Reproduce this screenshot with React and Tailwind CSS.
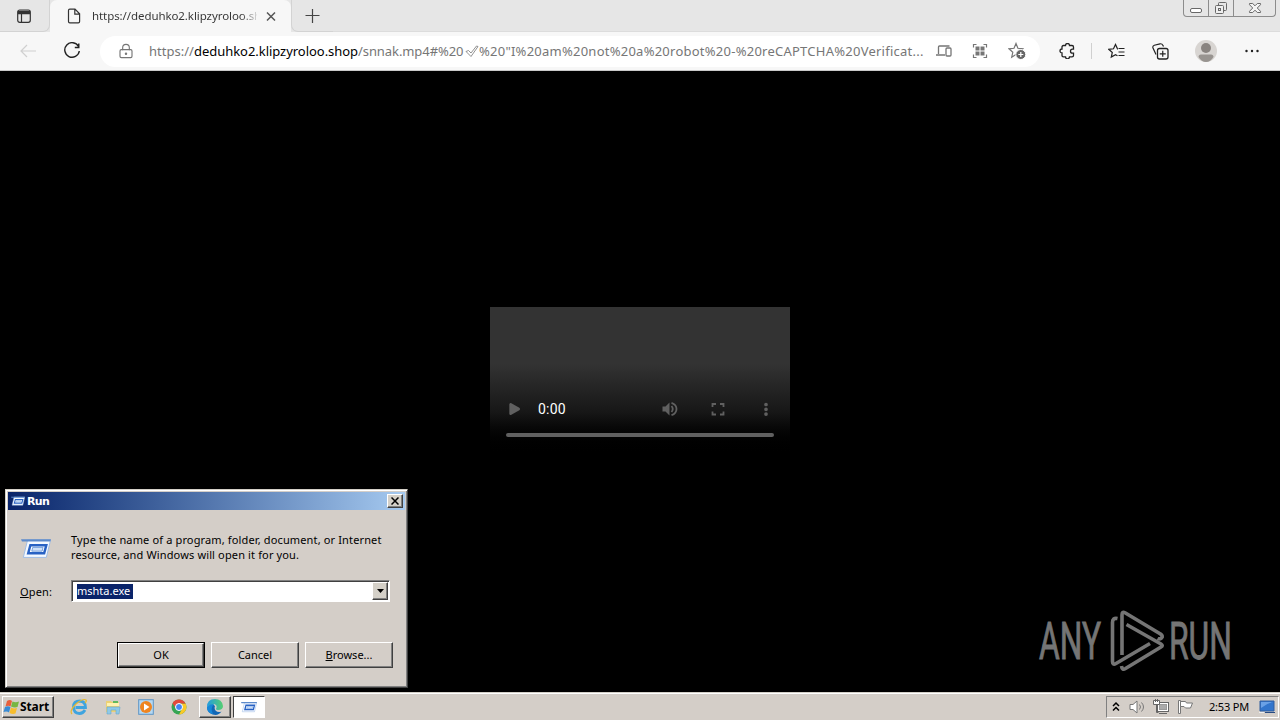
import { LockKeyhole, Play } from 'lucide-react';

const Icon = ({ w = 16, h = 16, className = '', children }) => (
  <svg width={w} height={h} viewBox={`0 0 ${w} ${h}`} fill="none" stroke="currentColor" className={`block shrink-0 ${className}`}>
    {children}
  </svg>
);

const TabActionsIcon = () => (
  <Icon className="text-[#333]">
    <rect x="1.7" y="2" width="12.6" height="12.3" rx="2" strokeWidth="1.2" />
    <path d="M2 4.500h12" strokeWidth="3.500" />
    <path d="M5.5 6v8" strokeWidth="1.2" />
  </Icon>
);

const PageIcon = () => (
  <Icon className="text-[#333]">
    <path d="M2.500 2.500Q2.500 1.200 3.800 1.200H9l4.600 4.600v7.700q0 1.300-1.300 1.300H3.800q-1.300 0-1.300-1.300zM8.800 1.400v4.700h4.700" strokeWidth="1.200" />
  </Icon>
);

const RunIcon = ({ w, h }) => (
  <svg width={w} height={h} viewBox="0 0 32 22" className="block shrink-0">
    <path d="M7 2h24.500L27 20.500H2.500z" fill="#f4f9ff" stroke="#9dbbe4" strokeWidth="1" />
    <path d="M0 1h32l-.7 2.500H1z" fill="#5c8acb" />
    <path d="M10 7.500h17l-2.300 8.500H7.700z" fill="#fff" stroke="#2862c4" strokeWidth="2.600" />
    <path d="M12.500 9.800h11l-1 4h-11z" fill="#cfe1f8" stroke="#6f9cdc" />
  </svg>
);

const WindowButtons = () => (
  <div className="flex h-[17px] w-[93px] rounded-b-[4px] border border-t-0 border-[#8c8c8c] text-[#686868]">
    <div className="flex w-[25px] justify-center border-r border-[#8c8c8c]">
      <Icon>
        <rect x="2.500" y="8.500" width="11" height="4" rx="1.500" fill="#fff" />
      </Icon>
    </div>
    <div className="flex w-[25px] justify-center border-r border-[#8c8c8c]">
      <Icon>
        <rect x="5.500" y="2.500" width="8" height="8" rx="1" />
        <rect x="2.500" y="5.500" width="8" height="8" rx="1" fill="#eee" />
        <rect x="5.500" y="8.500" width="2" height="2" />
      </Icon>
    </div>
    <div className="flex flex-1 justify-center">
      <Icon>
        <path d="M2.500 3.500h3.200L8 5.800l2.300-2.300h3.200v1.200L10.300 8l3.200 3.300v1.200h-3.200L8 10.200l-2.300 2.300H2.500v-1.200L5.700 8 2.500 4.700z" fill="#f4f4f4" />
      </Icon>
    </div>
  </div>
);

const TabStrip = () => (
  <div className="flex h-8 bg-[#e6e6e6]">
    <div className="flex w-[50px] rounded-br-[7px] border-r border-b border-[#d3d3d3] pt-2 pl-4">
      <TabActionsIcon />
    </div>
    <div className="flex h-8 w-[241px] rounded-t-[7px] bg-[#f7f7f7] pt-2 pl-4">
      <PageIcon />
      <div className="ml-[10px] w-[165px] bg-linear-to-r from-[#333] from-90% to-[#ddd] bg-clip-text font-['Noto_Sans'] text-[11.500px] leading-4 tracking-[-0.080px] whitespace-nowrap text-transparent">
        https://deduhko2.klipzyroloo.sh
      </div>
      <Icon className="ml-[6px] text-[#555]">
        <path d="M4 4.500l8 8M12 4.500l-8 8" strokeWidth="1.500" />
      </Icon>
    </div>
    <div className="flex h-8 w-[42px] rounded-bl-[7px] border-b border-l border-[#d3d3d3] pt-2 pl-3">
      <Icon className="text-[#444]">
        <path d="M8.500 1v14M1.500 7.500h14" strokeWidth="1.200" />
      </Icon>
    </div>
    <div className="flex flex-1 justify-end border-b border-[#dcdcdc] pr-1">
      <WindowButtons />
    </div>
  </div>
);

const AddressBar = () => (
  <div className="ml-[19px] flex h-[31px] w-[940px] items-center rounded-full bg-white text-[#767676]">
    <LockKeyhole className="ml-[18px] size-4" strokeWidth={1.7} />
    <div className="ml-[15px] flex w-[775px] items-center font-['Noto_Sans'] text-[13px] leading-5 whitespace-nowrap">
      <span className="w-[45px]">https://</span>
      <span className="w-[164px] tracking-[-0.040px] text-black">deduhko2.klipzyroloo.shop</span>
      <span className="w-[107px] tracking-[-0.080px]">/snnak.mp4#%20</span>
      <Icon w={14}>
        <path d="M1 8.500l2.500-1L6 10l5.500-7 1.500.5L6 13.500z" strokeWidth=".8" />
      </Icon>
      <span className="tracking-[0.245px]">%20"I%20am%20not%20a%20robot%20-%20reCAPTCHA%20Verificat...</span>
    </div>
    <Icon className="ml-[12px]">
      <path d="M2.500 11V4q0-1 1-1h10M0 12h9" strokeWidth="1.300" />
      <rect x="10" y="5" width="5" height="8" rx="1" strokeWidth="1.300" />
    </Icon>
    <Icon className="ml-[20px]">
      <path d="M1.500 4.500v-3h3M11.500 1.500h3v3M14.500 11.500v3h-3M4.500 14.500h-3v-3" strokeWidth="1.200" />
      <path d="M3.500 3.500h4v4h-4zM8.500 3.500h4v4h-4zM3.500 8.500h4v4h-4zM8.500 8.500h4v4h-4z" fill="currentColor" stroke="none" />
    </Icon>
    <Icon w={18} h={18} className="ml-[20px]">
      <path d="M8 1.500l1.900 4.800 4.900.5-3.700 3.300 1 4.600L8 12.500l-4.300 2.700 1.100-4.900L1 6.800l5-.5z" strokeWidth="1.200" />
      <circle cx="12.800" cy="12.500" r="5" fill="#666" stroke="#fff" />
      <path d="M12.800 10v5M10.300 12.500h5" stroke="#fff" strokeWidth="1.200" />
    </Icon>
  </div>
);

const Toolbar = () => (
  <div className="flex h-[39px] items-center border-b border-[#c9c9c9] bg-[#f7f7f7] pl-5 text-[#222]">
    <Icon className="text-[#d0d0d0]">
      <path d="M7 2L1 8l6 6M1 8h15" strokeWidth="1.200" />
    </Icon>
    <Icon w={18} h={18} className="ml-[27px]">
      <path d="M15.500 4.500A7.300 7.300 0 1 0 16.300 9M15.800 1.500v4h-4" strokeWidth="1.400" />
    </Icon>
    <AddressBar />
    <Icon className="ml-[19px]">
      <path d="M4.500 2.500h2a2 2 0 0 1 4 0H13q1.500 0 1.500 1.500v2.200h-1a2 2 0 0 0 0 4h1v2.300q0 1.300-1.500 1.300h-2.500a2 2 0 0 1-4 0h-2Q3 13.800 3 12.500V10a2 2 0 0 1 0-4V4q0-1.500 1.500-1.500z" strokeWidth="1.300" />
    </Icon>
    <div className="ml-[16px] h-4 w-px bg-[#d0d0d0]" />
    <Icon w={17} className="ml-[16px]">
      <path d="M10 5.800H9.500L7.500 1.500l-2 4.300-4.700.5 3.500 3.200-1 4.600 4.200-2.400 2 1.100M10.500 5.500h6M10.500 9h6M10.500 12.500h6" strokeWidth="1.200" />
    </Icon>
    <Icon w={17} h={17} className="ml-[27px]">
      <path d="M4 11.500L1 5Q.300 3 2.300 2.200L8 .8q2-.3 3 1.700l.5 1" strokeWidth="1.200" />
      <rect x="5.500" y="5.500" width="10.500" height="10.500" rx="2" strokeWidth="1.300" />
      <path d="M10.750 7.800v6M7.750 10.800h6" strokeWidth="1.200" />
    </Icon>
    <svg width="22" height="22" className="ml-[26px] block">
      <circle cx="11" cy="11" r="11" fill="#d8d5d2" />
      <circle cx="11" cy="8" r="5" fill="#898480" />
      <path d="M3.500 17q0-2.500 2.500-2.500h10q2.500 0 2.500 2.500-3 5-7.500 5t-7.500-5" fill="#989490" />
    </svg>
    <Icon className="ml-[27px]">
      <path d="M2.500 8h.01M8 8h.01M13.500 8h.01" strokeWidth="2.400" strokeLinecap="round" />
    </Icon>
  </div>
);

const VideoPlayer = () => (
  <div className="mt-[236px] flex h-[150px] w-[300px] flex-col bg-linear-to-b from-[#333] from-38% via-[#171717] via-70% to-black pt-[91px] text-[#606060]">
    <div className="flex h-[22px] items-center">
      <Play className="ml-[16px] size-[16px] fill-current" strokeWidth={0} />
      <span className="ml-4 w-[120px] font-['Roboto'] text-[14px] leading-[22px] tracking-[0.200px] text-white">0:00</span>
      <Icon w={18} h={18} className="ml-[3px]">
        <path d="M1.500 6.500h3l4-4v13l-4-4h-3z" fill="currentColor" stroke="none" />
        <path d="M10.500 6q2.500 3 0 6M10.500 2.800q5 1.700 5 6.200t-5 6.200" strokeWidth="1.800" />
      </Icon>
      <Icon className="ml-[31px]">
        <path d="M2.500 6V3H6M10 3h3.500v3M13.500 10.500v3H10M6 13.500H2.500v-3" strokeWidth="1.800" />
      </Icon>
      <Icon className="ml-[32px]">
        <path d="M8 3.500h.01M8 8.300h.01M8 13.100h.01" strokeWidth="3.700" strokeLinecap="round" />
      </Icon>
    </div>
    <div className="mx-4 mt-[13px] h-1 rounded-full bg-[#606060]" />
  </div>
);

const Watermark = () => (
  <svg width="240" height="72" viewBox="0 0 240 72" className="absolute top-[609px] left-[1038px]" fill="#757575">
    <g fontFamily="Roboto" fontSize="51" stroke="#757575" strokeWidth=".9">
      <text x="1" y="50" textLength="62" lengthAdjust="spacingAndGlyphs">ANY</text>
      <text x="131" y="50" textLength="63" lengthAdjust="spacingAndGlyphs">RUN</text>
    </g>
    <g fill="none" stroke="#757575" strokeWidth="3.600" strokeLinejoin="round">
      <path d="M79.500 9.500q-5-1-5 4v39q0 4 3.500 2L112 34.500" />
      <path d="M84 46V6q0-4 3-2.300l35.500 21.300q3 2.500 1 4t-4 .5" />
      <path d="M88.500 15.500L123 35q2.500 1.500 0 3L87.500 59.500q-3.500 2-4-2.500" />
    </g>
  </svg>
);

const DialogButton = ({ children, primary }) => (
  <div className={`h-[26px] w-[88px] ${primary ? 'border border-black' : ''}`}>
    <div className="flex h-full items-center justify-center border border-t-white border-r-[#404040] border-b-[#404040] border-l-white pb-[2px] shadow-[inset_-1px_-1px_#808080]">
      {children}
    </div>
  </div>
);

const RunDialog = () => (
  <div className="absolute top-[489px] left-[5px] h-[199px] w-[403px] border border-t-[#d4d0c8] border-r-[#404040] border-b-[#404040] border-l-[#d4d0c8] bg-[#d4cec8] p-[2px] font-['Noto_Sans'] text-[11px] leading-[15px] whitespace-nowrap text-black shadow-[inset_1px_1px_white,inset_-1px_-1px_#808080]">
    <div className="flex h-[18px] items-center bg-linear-to-r from-[#0a246a] to-[#a6caf0] pr-[2px] pl-[3px]">
      <RunIcon w={14} h={10} />
      <span className="ml-[2px] flex-1 font-['DejaVu_Sans'] text-[11px] font-bold tracking-[-0.600px] text-white">Run</span>
      <div className="flex h-[14px] w-[16px] items-center justify-center border border-t-white border-r-[#404040] border-b-[#404040] border-l-white bg-[#d4d0c8] shadow-[inset_-1px_-1px_#808080]">
        <Icon w={8} h={8}>
          <path d="M.5.500l7 7M7.500.500l-7 7" strokeWidth="1.500" />
        </Icon>
      </div>
    </div>
    <div className="flex pt-[22px] pl-[13px]">
      <div className="pt-[6px]">
        <RunIcon w={30} h={21} />
      </div>
      <div className="ml-[20px]">
        <p className="tracking-[0.140px]">Type the name of a program, folder, document, or Internet</p>
        <p className="tracking-[0.140px]">resource, and Windows will open it for you.</p>
      </div>
    </div>
    <div className="mt-[18px] flex h-[22px] items-center pl-[12px]">
      <span className="w-[51px] tracking-[0.150px]"><u>O</u>pen:</span>
      <div className="flex h-[22px] w-[319px] items-center border border-t-[#808080] border-r-white border-b-white border-l-[#808080] bg-white pr-px pl-[5px] shadow-[inset_1px_1px_#404040]">
        <span className="h-[15px] w-[56px] bg-[#0a246a] leading-[14px] text-white">mshta.exe</span>
        <div className="ml-auto flex h-[18px] w-[16px] items-center justify-center border border-t-white border-r-[#404040] border-b-[#404040] border-l-white bg-[#d4d0c8] shadow-[inset_-1px_-1px_#808080]">
          <svg width="7" height="4"><path d="M0 0h7L3.500 4z" /></svg>
        </div>
      </div>
    </div>
    <div className="mt-[40px] flex gap-[6px] pl-[109px]">
      <DialogButton primary>OK</DialogButton>
      <DialogButton>Cancel</DialogButton>
      <DialogButton><span><u>B</u>rowse...</span></DialogButton>
    </div>
  </div>
);

const StartFlag = () => (
  <svg width="18" height="16" viewBox="0 0 18 16" className="block">
    <path d="M4 2q3-2 5 0L7.500 7.500q-2-1.500-5 0z" fill="#e8603c" />
    <path d="M9.500 2.500q3 1.500 6.500 0L14.500 8q-3 1-6.500-.5z" fill="#77b643" />
    <path d="M2 8q3-1.500 5.500 0L6 13.500q-2-1.500-5.500-.5z" fill="#398bd4" />
    <path d="M8 8.500q3 1.500 6 .5l-1.500 5.500q-3 1-6-.5z" fill="#f7bd2e" />
  </svg>
);

const ExplorerLogo = () => (
  <svg width="18" height="18" viewBox="0 0 18 18" className="block">
    <path d="M15 12Q13 15.500 9.500 15.500q-6-.5-6-6.500t6.500-6q5.500.5 5.500 6.500H5.500" fill="none" stroke="#3fa4df" strokeWidth="2.800" />
    <path d="M2 16Q-1 13 6 6q7-6 10-4 1 1-1 3" fill="none" stroke="#e8b92e" strokeWidth="1.200" />
  </svg>
);

const FolderLogo = () => (
  <svg width="16" height="16" viewBox="0 0 16 16" className="block">
    <path d="M1 2h5l1 1h7v10H1z" fill="#ecd174" />
    <path d="M2 4h12v3H2z" fill="#fff2b0" />
    <path d="M8 2h5v2H8z" fill="#60b95f" />
    <path d="M2 8h13l-1 7h-3v-4H6v4H2z" fill="#8fc9e7" stroke="#65a7cc" strokeWidth=".6" />
  </svg>
);

const MediaLogo = () => (
  <svg width="16" height="16" viewBox="0 0 16 16" className="block">
    <rect x=".7" y=".7" width="14.600" height="14.600" fill="#b5d8f2" stroke="#5c94c5" />
    <circle cx="8" cy="8" r="6" fill="#ef8520" />
    <path d="M6 4.500v7L11.500 8z" fill="#fff" />
  </svg>
);

const ChromeLogo = () => (
  <svg width="16" height="16" viewBox="0 0 16 16" className="block">
    <circle cx="8" cy="8" r="7.500" fill="#35a553" />
    <path d="M8 8V4.500h6.600A7.500 7.500 0 0 1 8 15.500L11 10z" fill="#fbc926" />
    <path d="M1.500 4.200A7.500 7.500 0 0 1 14.500 4.500H8L5 10z" fill="#e2493b" />
    <circle cx="8" cy="8" r="3.500" fill="#4285f4" stroke="#fff" />
  </svg>
);

const EdgeLogo = () => (
  <svg width="16" height="16" viewBox="0 0 16 16" className="block">
    <defs>
      <linearGradient id="edge" x2="1">
        <stop stopColor="#239be0" />
        <stop offset="1" stopColor="#56cf70" />
      </linearGradient>
    </defs>
    <path d="M0 8a8 8 0 0 0 14.500 4.500Q11 14 8.500 11.500 7 9.500 8 7L4 4z" fill="#1267b6" />
    <path d="M0 8q3-4 7-3-4 4-1 10-6-1-6-7" fill="#1687d9" />
    <path d="M0 8Q0 0 8 0q7 0 8 7 0 4-5 4-2 0-2-1 2-4-2-5-4 0-7 3" fill="url(#edge)" />
  </svg>
);

const Tray = () => (
  <div className="ml-auto flex h-[22px] w-[173px] items-center border border-t-[#808080] border-r-white border-b-white border-l-[#808080] pl-[5px]">
    <Icon w={8} h={12} className="text-black">
      <path d="M1 5l3-3 3 3M1 9.500l3-3 3 3" strokeWidth="1.500" />
    </Icon>
    <Icon w={17} className="ml-[9px] text-[#777]">
      <path d="M1 5.500h3L8 2v12l-4-3.500H1z" fill="#fff" />
      <path d="M10.500 5.500q2 2.500 0 5M12.500 3.500q4 4.500 0 9" />
    </Icon>
    <Icon w={17} className="ml-[7px] text-[#666]">
      <rect x="4.500" y="3.500" width="11" height="9" fill="#fff" />
      <rect x="6.500" y="5.500" width="7" height="5" fill="#aaa" stroke="#999" />
      <path d="M.5 1.500h6v4h-6z" fill="#fff" />
      <path d="M2.500 0v3M4.500 0v3M3.500 5.500v8h2M6 14.500h8" />
    </Icon>
    <Icon w={17} className="ml-[7px] text-[#777]">
      <path d="M1.500 1.500h2v13h-2z" fill="#fff" />
      <path d="M3.500 2.500h5l1 1.500h6l-2 5h-5L7 7.500H3.500z" fill="#fff" />
    </Icon>
    <span className="ml-[15px] w-[42px] text-[11px] tracking-[-0.200px]">2:53 PM</span>
    <svg width="16" height="14" className="ml-[8px] block">
      <path d="M1 1h14v10H1z" fill="#3275cc" stroke="#315e9f" />
      <path d="M2 2h12Q8 3 2 8z" fill="#6aa1e6" />
      <path d="M0 12h5v1H0z" fill="#eee" />
      <path d="M6 12h10v1H6z" fill="#284b82" />
    </svg>
  </div>
);

const Taskbar = () => (
  <div className="flex h-7 items-center border-t border-[#d4d0c8] bg-[#d4cec8] pt-px pr-px pl-[2px] font-['Noto_Sans'] whitespace-nowrap text-black shadow-[inset_0_1px_white]">
    <div className="flex h-[22px] w-[52px] items-center border border-t-white border-r-[#404040] border-b-[#404040] border-l-white shadow-[inset_-1px_-1px_#808080]">
      <StartFlag />
      <span className="-ml-px text-[12px] font-bold tracking-[-0.100px]">Start</span>
    </div>
    <div className="ml-[16px] flex items-center gap-[17px]">
      <ExplorerLogo />
      <FolderLogo />
      <MediaLogo />
      <ChromeLogo />
    </div>
    <div className="ml-[12px] flex h-[22px] w-[32px] items-center justify-center border border-t-white border-r-[#404040] border-b-[#404040] border-l-white shadow-[inset_-1px_-1px_#808080]">
      <EdgeLogo />
    </div>
    <div className="ml-[2px] flex h-[22px] w-[32px] items-center justify-center border border-t-[#404040] border-r-white border-b-white border-l-[#404040] bg-white">
      <RunIcon w={16} h={12} />
    </div>
    <Tray />
  </div>
);

export default function App() {
  return (
    <div className="relative flex h-[720px] w-[1280px] flex-col overflow-hidden bg-black">
      <TabStrip />
      <Toolbar />
      <main className="flex flex-1 items-start justify-center bg-black">
        <VideoPlayer />
      </main>
      <Watermark />
      <RunDialog />
      <Taskbar />
    </div>
  );
}
